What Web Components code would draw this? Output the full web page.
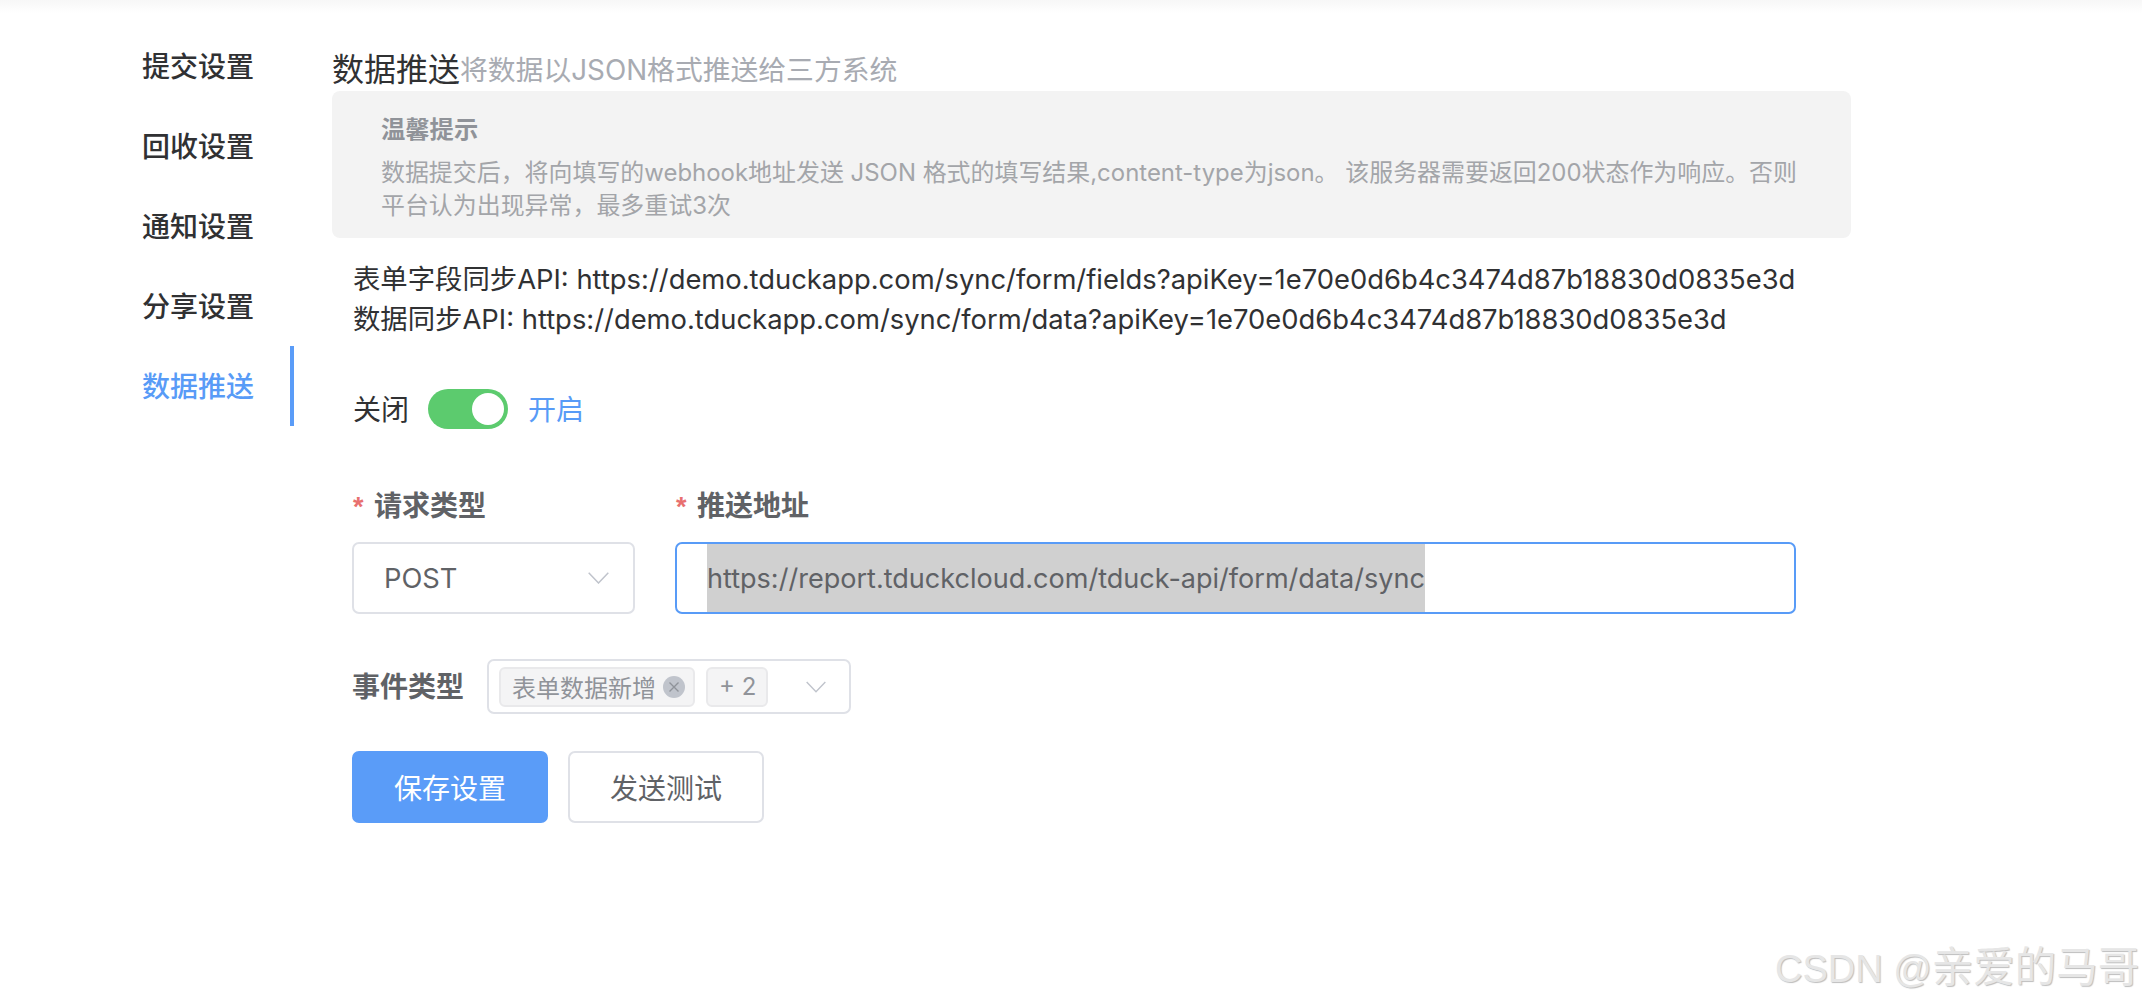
<!DOCTYPE html>
<html lang="zh-CN"><head><meta charset="utf-8"><title>数据推送</title>
<style>
html,body{margin:0;padding:0;background:#fff;height:1006px;overflow:hidden}
body{font-family:Inter,"Noto Sans CJK SC",sans-serif;color:#303133}
</style></head><body>
<settings-page>
  <side-nav slot="nav">
    <nav-item>提交设置</nav-item>
    <nav-item>回收设置</nav-item>
    <nav-item>通知设置</nav-item>
    <nav-item>分享设置</nav-item>
    <nav-item active>数据推送</nav-item>
  </side-nav>
  <push-panel slot="main"></push-panel>
</settings-page>
<water-mark></water-mark>
<script>
const FONT='Inter,"Noto Sans CJK SC",sans-serif';
const chevron=(w,h)=>`<svg width="${w}" height="${h}" viewBox="0 0 21 12" fill="none" style="display:block"><path d="M.7.7 10.5 11 20.3.7" stroke="#c0c4cc" stroke-width="1.5"/></svg>`;
function def(name,css,html,extra){
  customElements.define(name,class extends HTMLElement{
    constructor(){super();this.attachShadow({mode:'open'}).innerHTML=`<style>${css}</style>${html}`;}
    connectedCallback(){extra&&extra(this);}
  });
}
def('settings-page',`:host{display:flex;position:relative;height:1006px;box-sizing:border-box;padding-left:142px;font-family:${FONT}}
 .shadow{position:absolute;left:0;right:0;top:0;height:14px;background:linear-gradient(#f7f7f7,#fdfdfd 70%,#fff)}
 .nav{flex:none;width:152px;margin-right:38px;position:relative}.main{flex:none;width:1519px;position:relative}`,
 `<div class="shadow"></div><div class="nav"><slot name="nav"></slot></div><div class="main"><slot name="main"></slot></div>`);
def('side-nav',`:host{display:block;padding-top:26px}`,`<slot></slot>`);
def('nav-item',`:host{display:flex;align-items:center;height:80px;box-sizing:border-box;padding-bottom:2px;font-size:28px;font-weight:500;color:#303133;border-right:4px solid transparent}
 :host([active]){color:#589bf7;border-right-color:#5a9cf8}`,`<slot></slot>`);
def('tip-box',`:host{display:block;box-sizing:border-box;height:147px;background:#f3f3f3;border-radius:8px;padding:21px 49px 0 49px;color:#a3a5a9}
 .t{font-size:24.3px;line-height:34px;font-weight:700;color:#909399}.b{font-size:23.95px;line-height:33px;margin-top:10px}`,
 `<div class="t">温馨提示</div><div class="b"><slot></slot></div>`);
def('text-select',`:host{display:flex;align-items:center;justify-content:space-between;box-sizing:border-box;height:72px;border:2px solid #dfe1e7;border-radius:7px;background:#fff;padding:0 24px 0 30px;font-size:27.3px;color:#606266}`,
 `<span><slot></slot></span>${chevron(21,12)}`);
def('tag-chip',`:host{display:inline-flex;align-items:center;box-sizing:border-box;height:40px;background:#f4f4f5;border:2px solid #e9e9eb;border-radius:6px;padding:0 10px 0 11px;font-size:24px;color:#909399;white-space:nowrap}
 svg{display:block;margin-left:7px;margin-right:-2px}`,
 `<slot></slot><svg id="x" width="22" height="22" viewBox="0 0 22 22"><circle cx="11" cy="11" r="11" fill="#c0c4cc"/><path d="M6.5 6.5l9 9M15.5 6.5l-9 9" stroke="#8f939a" stroke-width="1.4"/></svg>`,
 el=>{if(!el.hasAttribute('closable'))el.shadowRoot.getElementById('x').remove();});
def('multi-select',`:host{display:flex;align-items:center;box-sizing:border-box;width:364px;height:55px;border:2px solid #dfe1e7;border-radius:7px;padding-left:10px;background:#fff;gap:11px}
 .a{margin-left:auto;margin-right:23px}`,`<slot></slot><span class="a">${chevron(20,12)}</span>`);
def('ui-button',`:host{display:flex;align-items:center;justify-content:center;box-sizing:border-box;height:72px;border:2px solid #dfe1e7;border-radius:7px;font-size:28px;color:#606266;background:#fff;width:196px}
 :host([primary]){background:#5a9cf8;border-color:#5a9cf8;color:#fff}`,`<slot></slot>`);
def('toggle-switch',`:host{display:flex;align-items:center;font-size:28px;color:#303133;height:40px}
 span{padding-bottom:2px}.on{color:#589bf7}.s{width:80px;height:40px;border-radius:20px;background:#5ccb6e;margin:0 20px 0 19px;position:relative;flex:none}
 .s i{position:absolute;right:4px;top:4px;width:32px;height:32px;border-radius:50%;background:#fff}`,
 `<span>关闭</span><div class="s"><i></i></div><span class="on">开启</span>`);
def('form-label',`:host{display:block;height:40px;font-size:28px;line-height:40px;font-weight:700;color:#606266;white-space:nowrap}
 b{color:#e8706f;font-weight:700;font-family:"Liberation Sans",sans-serif;display:inline-block;width:21px;font-size:27px;line-height:1}`,`<b id="s">*</b><slot></slot>`,
 el=>{if(!el.hasAttribute('required'))el.shadowRoot.getElementById('s').remove();});
def('push-panel',`:host{display:block;padding-top:46px;font-family:${FONT}}
 .head{display:flex;align-items:center;height:45px;white-space:nowrap}
 .head h2{margin:0 0 3px;font-size:32px;font-weight:400;color:#303133}.head span{font-size:27.8px;color:#a8abb2;padding-bottom:1px}
 .api{padding-left:21px;margin-top:21px;font-size:27.36px;line-height:40px;color:#303133;white-space:nowrap}
 .form{padding-left:20px}
 toggle-switch{margin:50px 0 0 1px}
 .grid{display:grid;grid-template-columns:283px 1121px;column-gap:40px;row-gap:16px;margin-top:57px}
 .lab{padding-left:1px}
 .lab2{padding-left:1px}
 .url{display:flex;align-items:center;box-sizing:border-box;height:72px;border:2px solid #589bf7;border-radius:7px;padding-left:30px;font-size:27.05px;color:#606266;white-space:nowrap}
 .url span{display:flex;align-items:center;align-self:stretch;background:#d0d0d0}
 .ev{display:flex;align-items:center;margin-top:45px}.ev form-label{width:135px}
 .btns{display:flex;gap:20px;margin-top:37px}`,
 `<div class="head"><h2>数据推送</h2><span>将数据以JSON格式推送给三方系统</span></div>
 <tip-box>数据提交后，将向填写的webhook地址发送 JSON 格式的填写结果,content-type为json。 该服务器需要返回200状态作为响应。否则平台认为出现异常，最多重试3次</tip-box>
 <div class="api"><div>表单字段同步API: https://demo.tduckapp.com/sync/form/fields?apiKey=1e70e0d6b4c3474d87b18830d0835e3d</div><div>数据同步API: https://demo.tduckapp.com/sync/form/data?apiKey=1e70e0d6b4c3474d87b18830d0835e3d</div></div>
 <div class="form">
  <toggle-switch></toggle-switch>
  <div class="grid">
   <form-label class="lab" required>请求类型</form-label><form-label class="lab2" required>推送地址</form-label>
   <text-select>POST</text-select>
   <div class="url"><span>https://report.tduckcloud.com/tduck-api/form/data/sync</span></div>
  </div>
  <div class="ev"><form-label>事件类型</form-label><multi-select><tag-chip closable>表单数据新增</tag-chip><tag-chip>+ 2</tag-chip></multi-select></div>
  <div class="btns"><ui-button primary>保存设置</ui-button><ui-button>发送测试</ui-button></div>
 </div>`);
def('water-mark',`:host{position:absolute;left:1775px;top:945px;white-space:nowrap;color:#e6e6e6;font-family:"Liberation Sans","Noto Sans CJK SC",sans-serif;font-size:38px;line-height:46px;text-shadow:1px 1px 1px #bdbdbd}
 span{font-size:41.5px}`,`CSDN @<span>亲爱的马哥</span>`);
</script>
</body></html>
